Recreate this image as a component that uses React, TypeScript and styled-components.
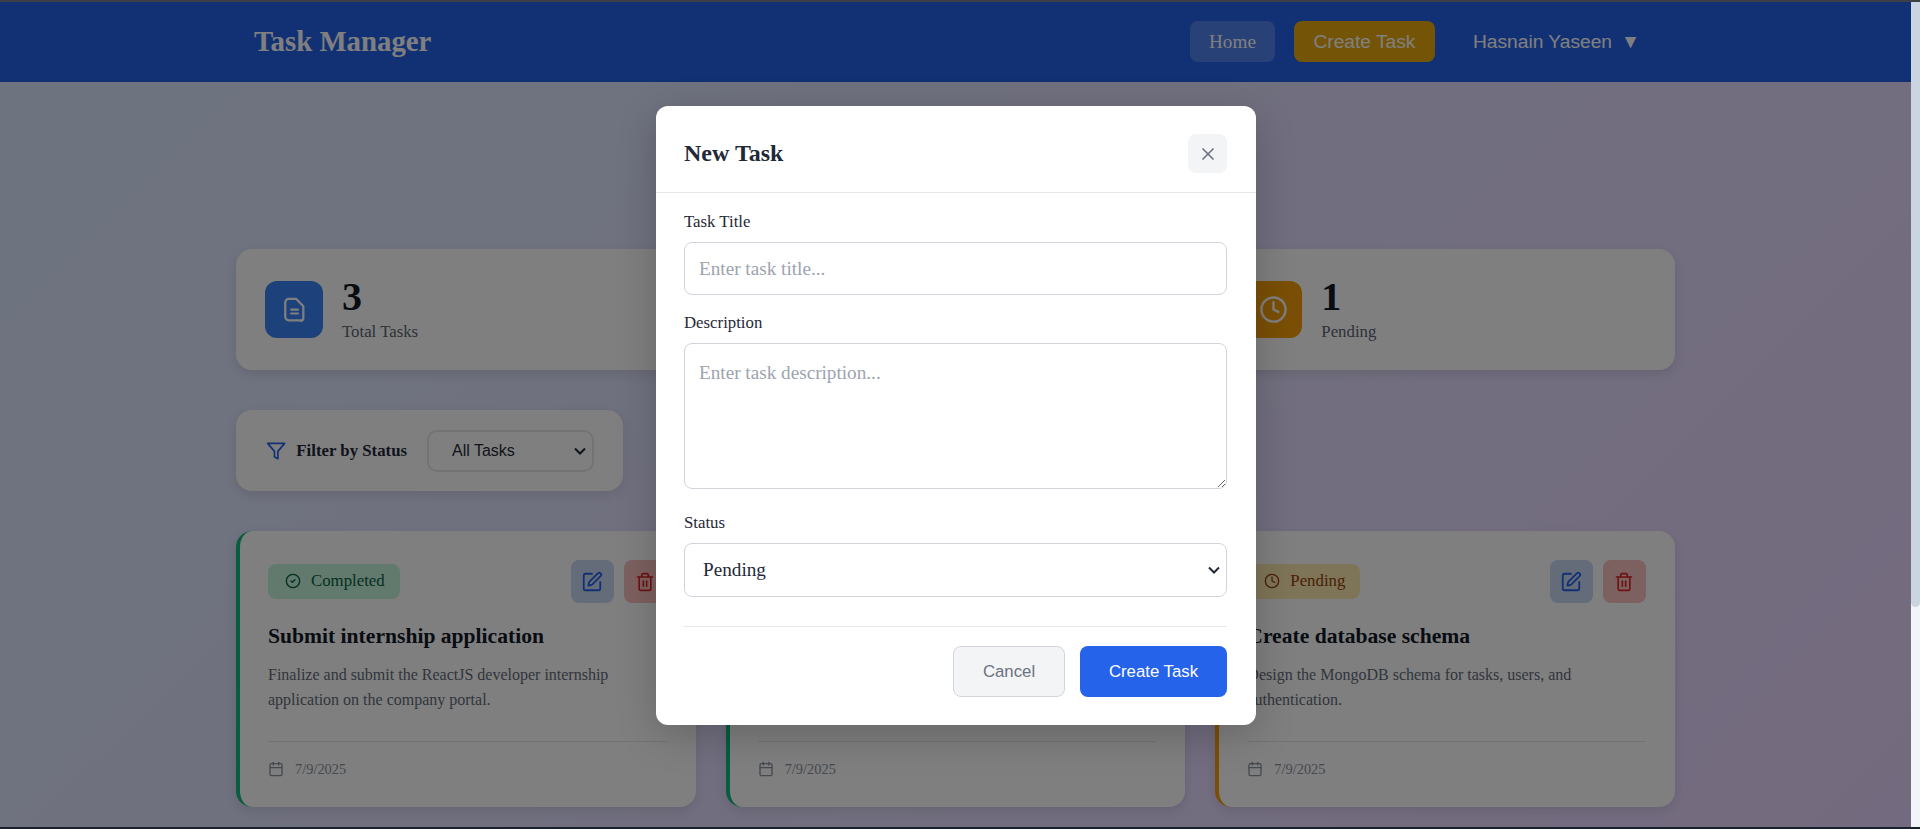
import React from "react";
import styled, { createGlobalStyle } from "styled-components";
import { Calendar, CircleCheck, Clock, SquarePen, Trash2, X } from "lucide-react";

const chevron =
  "url(\"data:image/svg+xml,%3Csvg xmlns='http://www.w3.org/2000/svg' width='12' height='8' viewBox='0 0 12 8'%3E%3Cpath d='M1 1.5l5 5 5-5' fill='none' stroke='%231f2937' stroke-width='2'/%3E%3C/svg%3E\")";

const GlobalStyle = createGlobalStyle`
  html, body {
    margin: 0;
    padding: 0;
    height: 829px;
    overflow: hidden;
    font-family: "Liberation Serif", "Times New Roman", serif;
  }
  * {
    box-sizing: border-box;
  }
`;

const Shell = styled.div`
  display: flex;
  flex-direction: column;
  height: 829px;
`;

const ScreenEdge = styled.div<{ $color: string }>`
  height: 2px;
  flex: none;
  background: ${props => props.$color};
`;

const Middle = styled.div`
  flex: 1;
  display: flex;
  min-height: 0;
`;

const Page = styled.div`
  position: relative;
  flex: 1;
  min-width: 0;
  overflow: hidden;
  background: linear-gradient(135deg, #dbeafe 0%, #e9d5ff 100%);
`;

const ScrollTrack = styled.div`
  width: 9px;
  flex: none;
  background: #f1f5f9;
`;

const ScrollThumb = styled.div`
  height: 605px;
  background: #cbd5e1;
  border-radius: 0 0 5px 5px;
`;

const Navbar = styled.header`
  height: 80px;
  background: #2563eb;
  display: flex;
  justify-content: center;
`;

const NavInner = styled.div`
  width: 1439px;
  padding: 0 35px 0 18px;
  display: flex;
  align-items: center;
  justify-content: space-between;
`;

const Logo = styled.h1`
  margin: -2px 0 0;
  font-size: 28.8px;
  font-weight: 700;
  color: #fff;
`;

const NavLinks = styled.nav`
  margin-top: -1px;
  display: flex;
  align-items: center;
  gap: 19px;
`;

const HomeLink = styled.a`
  width: 85px;
  height: 41px;
  display: flex;
  align-items: center;
  justify-content: center;
  border-radius: 8px;
  background: rgba(255, 255, 255, 0.2);
  color: #fff;
  font-size: 19.2px;
  font-weight: 500;
`;

const CreateLink = styled.button`
  width: 141px;
  height: 41px;
  padding: 0;
  border: none;
  border-radius: 8px;
  background: #e8a90e;
  color: #fff;
  font-family: "Liberation Sans", Arial, sans-serif;
  font-size: 19.2px;
`;

const UserMenu = styled.div`
  margin-left: 19px;
  display: flex;
  align-items: center;
  gap: 9px;
  color: #fff;
  font-family: "Liberation Sans", Arial, sans-serif;
  font-size: 19.2px;
`;

const Main = styled.main`
  width: 1439px;
  margin: 0 auto;
  padding-top: 167px;
  display: flex;
  flex-direction: column;
  gap: 40px;
`;

const Grid = styled.div`
  display: grid;
  grid-template-columns: repeat(3, 1fr);
  gap: 30px;
`;

const StatCard = styled.div`
  height: 121px;
  padding: 0 29px;
  display: flex;
  align-items: center;
  gap: 19px;
  background: #fff;
  border-radius: 16px;
  box-shadow: 0 4px 12px rgba(0, 0, 0, 0.1);
`;

const StatIcon = styled.div<{ $color: string }>`
  width: 58px;
  height: 57px;
  flex: none;
  display: flex;
  align-items: center;
  justify-content: center;
  border-radius: 12px;
  background: ${props => props.$color};
  color: #fff;
`;

const StatText = styled.div`
  padding-bottom: 5px;
`;

const StatNumber = styled.div`
  font-size: 40px;
  font-weight: 700;
  line-height: 48px;
  color: #111827;
`;

const StatLabel = styled.div`
  margin-top: 2px;
  font-size: 16.8px;
  line-height: 18px;
  color: #5b6472;
`;

const FilterCard = styled.div`
  width: 387px;
  height: 81px;
  padding: 0 29px 0 30px;
  display: flex;
  align-items: center;
  background: #fff;
  border-radius: 16px;
  box-shadow: 0 4px 12px rgba(0, 0, 0, 0.1);
  color: #2563eb;
`;

const FilterLabel = styled.span`
  margin: 0 20px 0 10px;
  font-size: 16.8px;
  font-weight: 700;
  color: #1f2937;
  white-space: nowrap;
`;

const FilterSelect = styled.select`
  width: 167px;
  height: 42px;
  flex: none;
  padding: 0 23px;
  appearance: none;
  border: 2px solid #e5e7eb;
  border-radius: 10px;
  background: #fff ${chevron} no-repeat right 6px center;
  color: #1f2937;
  font-family: "Liberation Sans", Arial, sans-serif;
  font-size: 16px;
`;

const TaskCard = styled.article<{ $accent: string }>`
  height: 276px;
  padding: 29px 29px 0 28px;
  background: #fff;
  border-left: 4px solid ${props => props.$accent};
  border-radius: 16px;
  box-shadow: 0 4px 12px rgba(0, 0, 0, 0.1);
`;

const TaskTop = styled.div`
  display: flex;
  align-items: center;
  justify-content: space-between;
`;

const Badge = styled.span<{ $bg: string; $color: string }>`
  height: 35px;
  padding: 0 15px 2px 17px;
  display: inline-flex;
  align-items: center;
  gap: 10px;
  border-radius: 8px;
  background: ${props => props.$bg};
  color: ${props => props.$color};
  font-size: 16.8px;
`;

const TaskActions = styled.div`
  display: flex;
  gap: 10px;
`;

const ActionButton = styled.button<{ $bg: string; $color: string }>`
  width: 43px;
  height: 43px;
  padding: 0;
  border: none;
  border-radius: 8px;
  display: flex;
  align-items: center;
  justify-content: center;
  background: ${props => props.$bg};
  color: ${props => props.$color};
`;

const TaskTitle = styled.h3`
  margin: 21px 0 13px;
  font-size: 21.6px;
  line-height: 25px;
  font-weight: 700;
  color: #111827;
`;

const TaskDesc = styled.p`
  margin: 0;
  height: 50px;
  font-size: 16px;
  line-height: 25px;
  color: #636b78;
`;

const TaskFooter = styled.div`
  margin-top: 29px;
  padding-top: 19px;
  border-top: 1px solid #e5e7eb;
  display: flex;
  align-items: center;
  gap: 11px;
  font-size: 14.4px;
  line-height: 16px;
  color: #8a92a0;
`;

const Overlay = styled.div`
  position: absolute;
  inset: 0;
  padding: 2px 0 0 1px;
  display: flex;
  align-items: center;
  justify-content: center;
  background: rgba(0, 0, 0, 0.5);
`;

const Modal = styled.div`
  width: 600px;
  height: 619px;
  background: #fff;
  border-radius: 12px;
  box-shadow: 0 10px 40px rgba(0, 0, 0, 0.2);
`;

const ModalHeader = styled.div`
  height: 87px;
  padding: 9px 29px 0 28px;
  display: flex;
  align-items: center;
  justify-content: space-between;
  border-bottom: 1px solid #e5e7eb;
`;

const ModalTitle = styled.h2`
  margin: 0;
  font-size: 24px;
  font-weight: 700;
  color: #1f2937;
`;

const CloseButton = styled.button`
  width: 39px;
  height: 39px;
  padding: 0;
  border: none;
  border-radius: 8px;
  display: flex;
  align-items: center;
  justify-content: center;
  background: #f3f4f6;
  color: #6b7280;
`;

const ModalForm = styled.form`
  padding: 20px 29px 0 28px;
`;

const Field = styled.div<{ $gap: number }>`
  margin-bottom: ${props => props.$gap}px;
`;

const FieldLabel = styled.label`
  display: block;
  margin-bottom: 11px;
  font-size: 16.8px;
  line-height: 18px;
  color: #1f2937;
`;

const TextInput = styled.input`
  display: block;
  width: 100%;
  height: 53px;
  padding: 0 14px;
  border: 1px solid #d1d5db;
  border-radius: 8px;
  font-family: inherit;
  font-size: 19.2px;
  &::placeholder {
    color: #9ca3af;
  }
`;

const TextArea = styled.textarea`
  display: block;
  width: 100%;
  height: 146px;
  padding: 18px 14px;
  border: 1px solid #d1d5db;
  border-radius: 8px;
  font-family: inherit;
  font-size: 19.2px;
  line-height: 22px;
  &::placeholder {
    color: #9ca3af;
  }
`;

const StatusSelect = styled.select`
  display: block;
  width: 100%;
  height: 54px;
  padding: 0 18px 2px;
  appearance: none;
  border: 1px solid #d1d5db;
  border-radius: 8px;
  background: #fff ${chevron} no-repeat right 6px center;
  color: #1f2937;
  font-family: inherit;
  font-size: 19.2px;
`;

const ModalActions = styled.div`
  margin-top: 29px;
  padding-top: 19px;
  border-top: 1px solid #e5e7eb;
  display: flex;
  justify-content: flex-end;
  gap: 15px;
`;

const FormButton = styled.button<{ $primary?: boolean }>`
  width: ${props => (props.$primary ? "147px" : "112px")};
  height: 51px;
  padding: 0;
  border-radius: 8px;
  border: ${props => (props.$primary ? "none" : "1px solid #d1d5db")};
  background: ${props => (props.$primary ? "#2563eb" : "#f3f4f6")};
  color: ${props => (props.$primary ? "#fff" : "#6b7280")};
  font-family: "Liberation Sans", Arial, sans-serif;
  font-size: 16.8px;
`;

const DocIcon = () => (
  <svg width="28" height="28" viewBox="0 0 24 24" fill="none" stroke="currentColor" strokeWidth="1.9" strokeLinecap="round" strokeLinejoin="round">
    <path d="M7.5 2.5H14l6 6.2v10.3a1.8 1.8 0 0 1-1.8 1.8v0.8M18.2 20.8H7.5a3 3 0 0 1-3-3V5.5a3 3 0 0 1 3-3" />
    <path d="M9.6 11.6h5.8M9.6 15h5.8" />
  </svg>
);

const FilterIcon = () => (
  <svg width="22" height="22" viewBox="0 0 24 24" fill="none" stroke="currentColor" strokeWidth="2" strokeLinecap="round" strokeLinejoin="round">
    <polygon points="22 3 2 3 10 12.46 10 19 14 21 14 12.46 22 3" />
  </svg>
);

const tasks = [
  {
    status: "Completed",
    title: "Submit internship application",
    desc: "Finalize and submit the ReactJS developer internship application on the company portal."
  },
  {
    status: "Completed",
    title: "Build task manager UI",
    desc: "Create the dashboard layout and the task cards."
  },
  {
    status: "Pending",
    title: "Create database schema",
    desc: "Design the MongoDB schema for tasks, users, and authentication."
  }
];

const App: React.FC = () => {
  return (
    <Shell>
      <GlobalStyle />
      <ScreenEdge $color="#3c3f46" />
      <Middle>
        <Page>
          <Navbar>
            <NavInner>
              <Logo>Task Manager</Logo>
              <NavLinks>
                <HomeLink>Home</HomeLink>
                <CreateLink>Create Task</CreateLink>
                <UserMenu>
                  Hasnain Yaseen <span>▼</span>
                </UserMenu>
              </NavLinks>
            </NavInner>
          </Navbar>

          <Main>
            <Grid>
              <StatCard>
                <StatIcon $color="#3b82f6">
                  <DocIcon />
                </StatIcon>
                <StatText>
                  <StatNumber>3</StatNumber>
                  <StatLabel>Total Tasks</StatLabel>
                </StatText>
              </StatCard>
              <StatCard>
                <StatIcon $color="#10b981">
                  <CircleCheck size={28} />
                </StatIcon>
                <StatText>
                  <StatNumber>2</StatNumber>
                  <StatLabel>Completed</StatLabel>
                </StatText>
              </StatCard>
              <StatCard>
                <StatIcon $color="#f59e0b">
                  <Clock size={29} />
                </StatIcon>
                <StatText>
                  <StatNumber>1</StatNumber>
                  <StatLabel>Pending</StatLabel>
                </StatText>
              </StatCard>
            </Grid>

            <FilterCard>
              <FilterIcon />
              <FilterLabel>Filter by Status</FilterLabel>
              <FilterSelect defaultValue="all">
                <option value="all">All Tasks</option>
                <option value="pending">Pending</option>
                <option value="completed">Completed</option>
              </FilterSelect>
            </FilterCard>

            <Grid>
              {tasks.map(task => {
                const done = task.status === "Completed";
                return (
                  <TaskCard key={task.title} $accent={done ? "#10b981" : "#f59e0b"}>
                    <TaskTop>
                      <Badge $bg={done ? "#c4f2da" : "#fdeab0"} $color={done ? "#065f46" : "#92400e"}>
                        {done ? <CircleCheck size={16} /> : <Clock size={16} />}
                        {task.status}
                      </Badge>
                      <TaskActions>
                        <ActionButton $bg="#c8d8f5" $color="#2563eb">
                          <SquarePen size={22} />
                        </ActionButton>
                        <ActionButton $bg="#fac0c0" $color="#dc2626">
                          <Trash2 size={20} />
                        </ActionButton>
                      </TaskActions>
                    </TaskTop>
                    <TaskTitle>{task.title}</TaskTitle>
                    <TaskDesc>{task.desc}</TaskDesc>
                    <TaskFooter>
                      <Calendar size={16} />
                      7/9/2025
                    </TaskFooter>
                  </TaskCard>
                );
              })}
            </Grid>
          </Main>

          <Overlay>
            <Modal>
              <ModalHeader>
                <ModalTitle>New Task</ModalTitle>
                <CloseButton type="button">
                  <X size={20} />
                </CloseButton>
              </ModalHeader>
              <ModalForm>
                <Field $gap={19}>
                  <FieldLabel>Task Title</FieldLabel>
                  <TextInput placeholder="Enter task title..." />
                </Field>
                <Field $gap={25}>
                  <FieldLabel>Description</FieldLabel>
                  <TextArea placeholder="Enter task description..." />
                </Field>
                <Field $gap={0}>
                  <FieldLabel>Status</FieldLabel>
                  <StatusSelect defaultValue="pending">
                    <option value="pending">Pending</option>
                    <option value="completed">Completed</option>
                  </StatusSelect>
                </Field>
                <ModalActions>
                  <FormButton type="button">Cancel</FormButton>
                  <FormButton type="button" $primary>
                    Create Task
                  </FormButton>
                </ModalActions>
              </ModalForm>
            </Modal>
          </Overlay>
        </Page>
        <ScrollTrack>
          <ScrollThumb />
        </ScrollTrack>
      </Middle>
      <ScreenEdge $color="#18202c" />
    </Shell>
  );
};

export default App;
